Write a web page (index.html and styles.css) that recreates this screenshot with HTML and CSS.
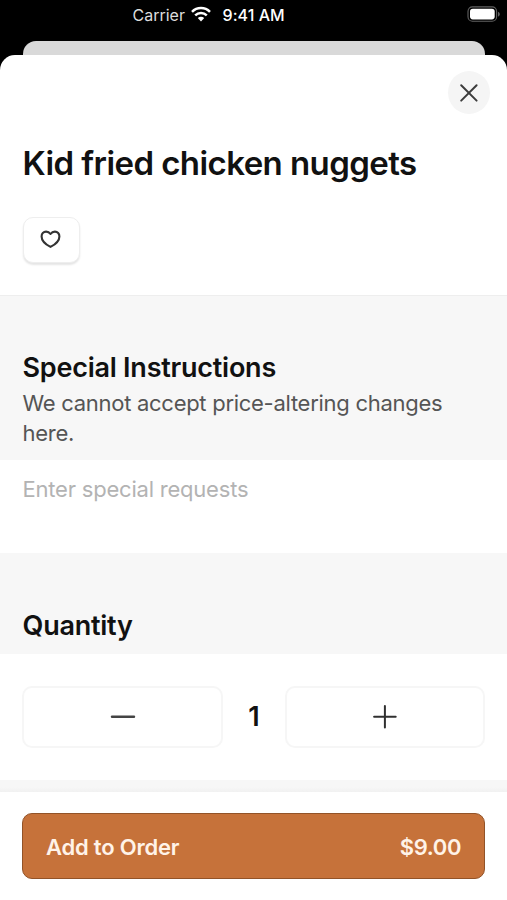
FILE: index.html
```html
<!DOCTYPE html>
<html lang="en">
<head>
<meta charset="utf-8">
<title>Kid fried chicken nuggets</title>
<link rel="stylesheet" href="styles.css">
</head>
<body>
<header class="status">
  <span class="carrier">Carrier</span>
  <svg class="wifi" width="20" height="16" viewBox="0 0 20 16" fill="none" stroke="#fff" stroke-width="2.5"><path d="M1 5.8C6 .7 14 .7 19 5.8M4.2 9.3c3.3-3.2 8.3-3.2 11.6 0"/><path d="M6.8 12.1c1.8-1.7 4.6-1.7 6.4 0L10 15.4Z" fill="#fff" stroke="none"/></svg>
  <span class="time">9:41 AM</span>
  <svg class="battery" width="34" height="16" viewBox="0 0 34 16"><rect x="1" y=".9" width="28.6" height="14.4" rx="4.5" fill="none" stroke="#626262" stroke-width="1.1"/><rect x="3" y="2.8" width="24.7" height="10.6" rx="2.8" fill="#fff"/><path d="M31 5.7c2.4.8 2.4 4 0 4.8Z" fill="#626262"/></svg>
</header>
<div class="behind"></div>
<main class="sheet">
  <section class="intro">
    <button class="close" aria-label="Close"><svg width="20" height="20" viewBox="0 0 20 20" fill="none" stroke="#3c3c3c" stroke-width="2" stroke-linecap="round"><path d="m2.2 2.2 15.4 15.4m0-15.4L2.2 17.6"/></svg></button>
    <h1>Kid fried chicken nuggets</h1>
    <button class="favorite" aria-label="Favorite"><svg width="22" height="20" viewBox="0 0 22 20" fill="none" stroke="#333" stroke-width="2.1" stroke-linejoin="round"><path d="M10.5 4C9.3 2.3 7.7 1.6 6.1 1.6c-2.7 0-4.5 2.2-4.5 4.8 0 4.4 4.5 8.2 8.9 10.5 4.4-2.3 8.9-6.1 8.9-10.5 0-2.6-1.8-4.8-4.5-4.8-1.6 0-3.2.7-4.4 2.4Z"/></svg></button>
  </section>
  <section class="band instructions">
    <h2>Special Instructions</h2>
    <p>We cannot accept price-altering changes here.</p>
  </section>
  <div class="requests">Enter special requests</div>
  <section class="band quantity"><h2>Quantity</h2></section>
  <div class="stepper">
    <button class="step" aria-label="Decrease"><svg width="26" height="26" viewBox="0 0 26 26" fill="none" stroke="#444" stroke-width="2.4" stroke-linecap="round"><path d="M2 12.8h22"/></svg></button>
    <span class="count">1</span>
    <button class="step" aria-label="Increase"><svg width="26" height="26" viewBox="0 0 26 26" fill="none" stroke="#303030" stroke-width="2" stroke-linecap="round"><path d="M2.1 12.8h21.6M12.9 2v21.6"/></svg></button>
  </div>
  <div class="divider"></div>
  <footer><button class="order"><span class="label">Add to Order</span><span class="price">$9.00</span></button></footer>
</main>
</body>
</html>
```

FILE: styles.css
```css
* { box-sizing: border-box; }
body {
  margin: 0;
  height: 900px;
  overflow: hidden;
  background: #000;
  color: #111;
  font-family: Inter, "Liberation Sans", sans-serif;
}
button { padding: 0; font: inherit; }
h1, h2, p { margin: 0; }
svg { display: block; flex: none; }
.status {
  height: 41px;
  padding: 6px 7px 0 132.5px;
  display: flex;
  align-items: flex-start;
  color: #fff;
  font-size: 16px;
  line-height: 18px;
}
.carrier { width: 57.5px; color: #ddd; white-space: nowrap; }
.wifi { margin-left: 1px; }
.time { margin-left: 11.5px; font-weight: 500; white-space: nowrap; letter-spacing: .05px; }
.battery { margin-left: auto; margin-right: -1px; }
.behind {
  height: 14px;
  margin: 0 22px 0 23px;
  border-radius: 13px 13px 0 0;
  background: #d9d9d9;
}
.sheet {
  height: 845px;
  border-radius: 15px 15px 0 0;
  background: #fff;
}
.intro {
  height: 241px;
  padding: 16px 17px 0 22.5px;
  border-bottom: 1px solid #eee;
  display: flex;
  flex-direction: column;
}
.close {
  align-self: flex-end;
  width: 42px;
  height: 43px;
  border: 0;
  border-radius: 50%;
  background: #f5f5f5;
  display: grid;
  place-items: center;
}
h1 {
  margin-top: 29px;
  font-size: 33px;
  line-height: 40px;
  font-weight: 600;
  letter-spacing: -.57px;
  white-space: nowrap;
}
.favorite {
  width: 57px;
  height: 46px;
  margin-top: 34px;
  border: 1px solid #eee;
  border-radius: 10px;
  background: #fff;
  box-shadow: 0 2px 2px #e5e5e5;
  display: grid;
  place-items: center;
}
.band { background: #f7f7f7; padding-left: 22.5px; }
h2 {
  font-size: 27px;
  line-height: 34px;
  font-weight: 600;
  letter-spacing: -.24px;
  white-space: nowrap;
}
.instructions { height: 164px; padding-top: 55px; }
.instructions p {
  width: 450px;
  margin-top: 3px;
  color: #555;
  font-size: 22px;
  line-height: 30px;
  letter-spacing: -.28px;
}
.requests {
  height: 93px;
  padding: 14px 22.5px;
  color: #b3b3b3;
  font-size: 22px;
  line-height: 30px;
  letter-spacing: -.21px;
}
.quantity { height: 101px; padding-top: 56px; }
.stepper {
  height: 126px;
  padding: 32px 22px 0;
  display: grid;
  grid-template-columns: 201px 62px 200px;
}
.step {
  height: 62px;
  border: 2px solid #f6f6f6;
  border-radius: 10px;
  background: #fff;
  display: grid;
  place-items: center;
}
.count {
  font-size: 27px;
  line-height: 62px;
  font-weight: 600;
  text-align: center;
}
.divider {
  height: 12px;
  background: linear-gradient(#f7f7f7 60%, #f1f1f1);
}
footer { padding: 21px 22px; }
.order {
  width: 100%;
  height: 66px;
  padding: 1px 23px 0;
  border: 1px solid #925328;
  border-radius: 10px;
  background: #c6723a;
  color: #fff3e8;
  display: flex;
  align-items: center;
  justify-content: space-between;
  font-size: 22px;
  font-weight: 600;
  letter-spacing: -.2px;
}
.price { letter-spacing: -.4px; }
```
